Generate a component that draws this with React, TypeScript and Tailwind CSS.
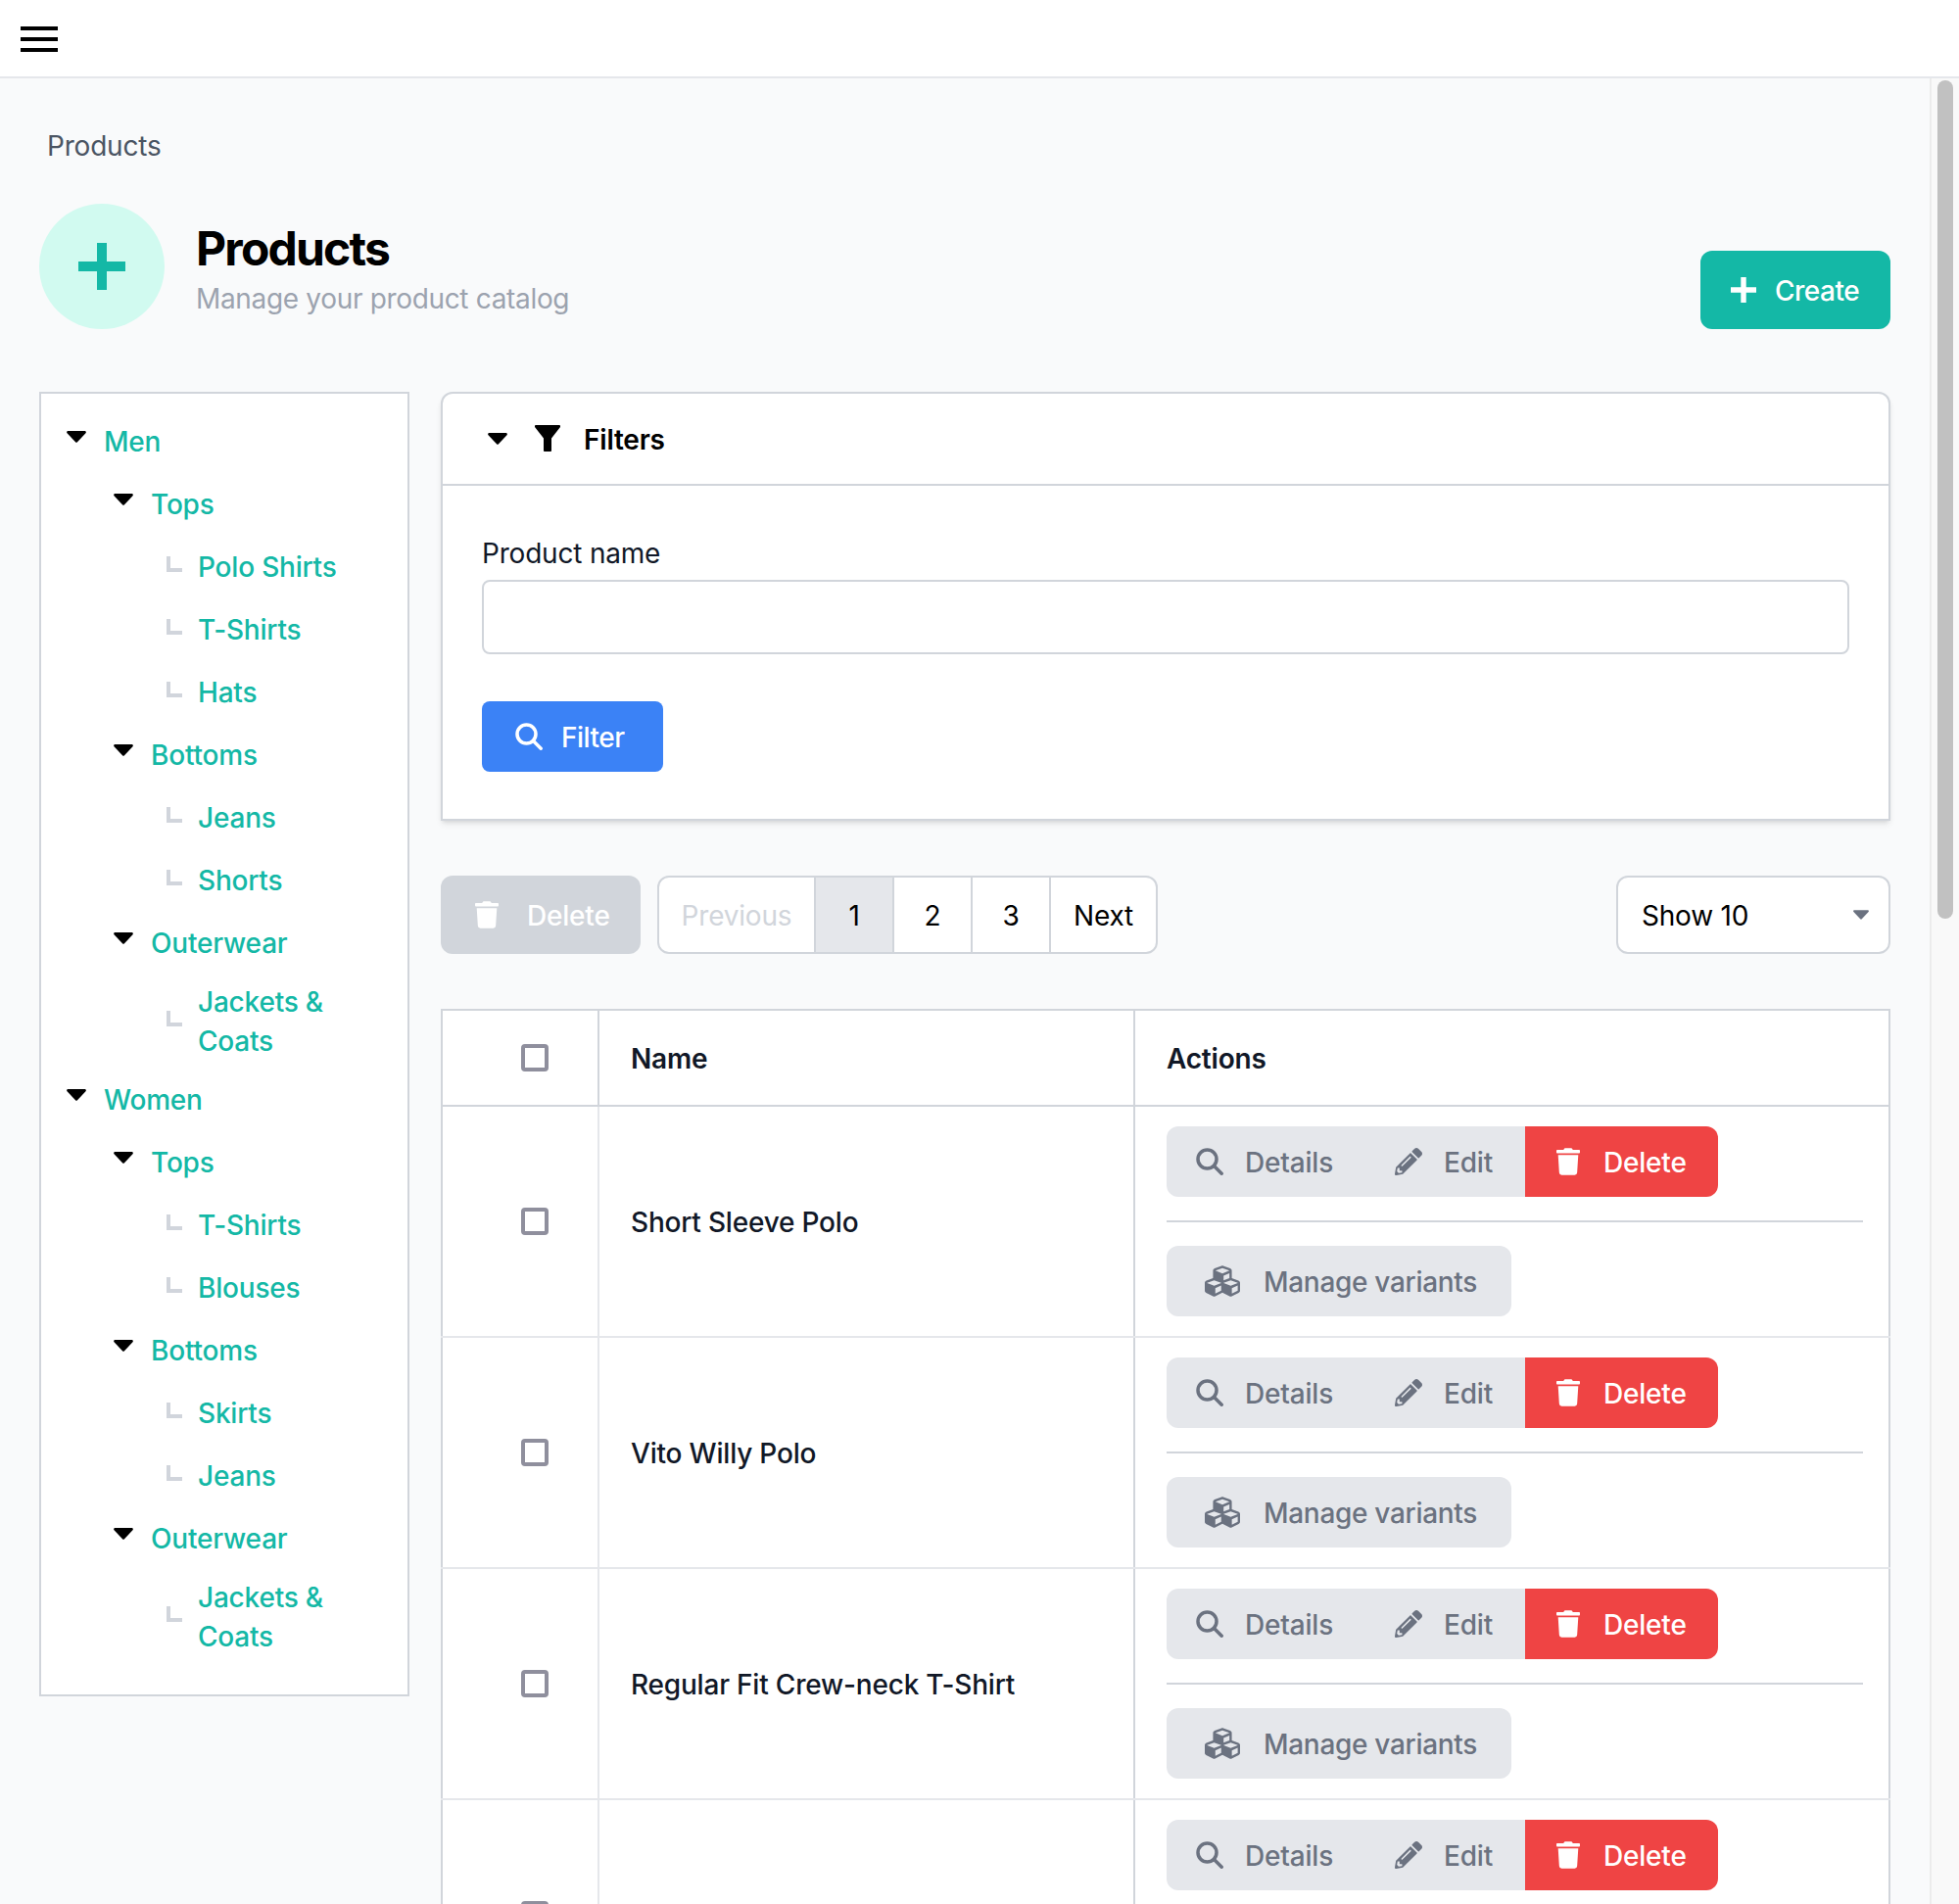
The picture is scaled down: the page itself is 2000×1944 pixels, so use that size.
import React from "react";
import { FaCubes, FaPencilAlt, FaTrash } from "react-icons/fa";

type TreeRow = { label: string; level: 0 | 1 | 2 };

const tree: TreeRow[] = [
  { label: "Men", level: 0 },
  { label: "Tops", level: 1 },
  { label: "Polo Shirts", level: 2 },
  { label: "T-Shirts", level: 2 },
  { label: "Hats", level: 2 },
  { label: "Bottoms", level: 1 },
  { label: "Jeans", level: 2 },
  { label: "Shorts", level: 2 },
  { label: "Outerwear", level: 1 },
  { label: "Jackets & Coats", level: 2 },
  { label: "Women", level: 0 },
  { label: "Tops", level: 1 },
  { label: "T-Shirts", level: 2 },
  { label: "Blouses", level: 2 },
  { label: "Bottoms", level: 1 },
  { label: "Skirts", level: 2 },
  { label: "Jeans", level: 2 },
  { label: "Outerwear", level: 1 },
  { label: "Jackets & Coats", level: 2 },
];

const products = ["Short Sleeve Polo", "Vito Willy Polo", "Regular Fit Crew-neck T-Shirt", ""];

const Caret = ({ className }: { className: string }) => (
  <svg viewBox="0 0 20 12" className={className} fill="currentColor">
    <path d="M1.5 0h17c1.2 0 1.8 1.4 1 2.3l-8.500 9c-.6.7-1.400.7-2 0l-8.500-9C-.3 1.400.3 0 1.500 0z" />
  </svg>
);

const SearchIcon = ({ className }: { className: string }) => (
  <svg viewBox="0 0 28 28" className={className} fill="none" stroke="currentColor" strokeWidth="3.5" strokeLinecap="round">
    <circle cx="11.500" cy="11.500" r="9.500" />
    <path d="M18.500 18.500L26.200 26.200" />
  </svg>
);

const PlusIcon = ({ className }: { className: string }) => (
  <svg viewBox="0 0 24 24" className={className} fill="currentColor">
    <path d="M9.500 0h5v9.500H24v5h-9.500V24h-5v-9.500H0v-5h9.500z" />
  </svg>
);

const FunnelIcon = ({ className }: { className: string }) => (
  <svg viewBox="0 0 26 27" className={className} fill="currentColor">
    <path d="M1 0h24c1 0 1.500 1 1 2l-9 11.500V26c0 .6-.5 1-1 1h-6c-.5 0-1-.4-1-1V13.500L0 2C-.5 1 0 0 1 0z" />
  </svg>
);

const TreeItem = ({ label, level }: TreeRow) => {
  if (level === 2) {
    return (
      <div className="flex items-center min-h-[48px] mb-4 pl-[128px]">
        <svg viewBox="0 0 16 16" className="w-4 h-4 mb-[6px] mr-4 shrink-0 text-gray-300" fill="none" stroke="currentColor" strokeWidth="4">
          <path d="M2 0v14h14" />
        </svg>
        <span className="leading-[40px] font-[550] text-[#14b8a6] pr-10">{label}</span>
      </div>
    );
  }
  return (
    <div className={level === 0 ? "flex items-center h-12 mb-4 pl-[26px]" : "flex items-center h-12 mb-4 pl-[74px]"}>
      <Caret className="w-5 h-3 mb-[10px] mr-[18px] shrink-0 text-black" />
      <span className="font-[550] text-[#14b8a6]">{label}</span>
    </div>
  );
};

const ProductRow = ({ name }: { name: string }) => (
  <tr>
    <td className="border-2 border-[#e5e7eb] border-l-[#d1d5db] pl-[80px]">
      <div className="w-7 h-7 rounded border-4 border-[#8f8f9d] bg-white" />
    </td>
    <td className="border-2 border-[#e5e7eb] border-r-[#d1d5db] pl-8 pt-[2px] font-medium text-[#111827]">{name}</td>
    <td className="border-2 border-[#e5e7eb] border-r-[#d1d5db] pl-8 pr-[26px] py-[20px]">
      <div className="flex">
        <div className="flex items-center h-[72px] w-[366px] bg-[#e5e7eb] rounded-l-xl font-medium text-[#6b7280]">
          <SearchIcon className="w-7 h-7 ml-[30px] mr-[22px]" />
          <span className="pt-[2px]">Details</span>
          <FaPencilAlt className="w-7 h-7 ml-[63px] mr-[22px]" />
          <span className="pt-[2px]">Edit</span>
        </div>
        <div className="flex items-center h-[72px] w-[197px] bg-[#ef4444] rounded-r-xl font-[550] text-white">
          <FaTrash className="w-6 h-7 ml-[32px] mr-[24px]" />
          <span className="pt-[2px]">Delete</span>
        </div>
      </div>
      <div className="h-[2px] bg-[#d1d5db] my-6" />
      <div className="flex items-center h-[72px] w-[352px] bg-[#e5e7eb] rounded-xl font-medium tracking-[-0.3px] text-[#6b7280]">
        <FaCubes className="w-9 h-9 ml-[39px] mr-[24px]" />
        <span className="pt-[2px]">Manage variants</span>
      </div>
    </td>
  </tr>
);

export default function App() {
  return (
    <div className="h-[1944px] flex flex-col overflow-hidden bg-[#f9fafb] text-[28px] tracking-[-0.2px] text-black font-['Inter',sans-serif]">
      <header className="h-[80px] shrink-0 flex items-center bg-white border-b-2 border-[#e5e7eb] pl-[21px]">
        <div className="flex flex-col gap-[7px] w-[38px] mt-[2px]">
          <div className="h-1 bg-black" />
          <div className="h-1 bg-black" />
          <div className="h-1 bg-black" />
        </div>
      </header>

      <div className="flex flex-1 min-h-0">
        <main className="flex-1 min-w-0 overflow-hidden px-10 pt-[48px]">
          <div className="pl-2 leading-[42px] text-[#4b5563]">Products</div>

          <div className="flex items-end justify-between mt-[38px]">
            <div className="flex items-center">
              <div className="w-32 h-32 rounded-full bg-[#d1faf0] flex items-center justify-center text-[#14b8a6]">
                <PlusIcon className="w-12 h-12" />
              </div>
              <div className="ml-8 pt-[5px]">
                <h1 className="text-[48px] leading-[60px] tracking-[-1.8px] font-bold">Products</h1>
                <p className="leading-[42px] tracking-[-0.33px] text-[#9ca3af]">Manage your product catalog</p>
              </div>
            </div>
            <button className="flex items-center h-[80px] w-[194px] rounded-xl bg-[#14b8a6] text-white font-medium tracking-[-0.5px]">
              <PlusIcon className="w-[26px] h-[26px] ml-[31px] mr-[19px]" />
              <span className="pt-[2px]">Create</span>
            </button>
          </div>

          <div className="flex items-start gap-8 mt-[64px]">
            <aside className="w-[378px] shrink-0 border-2 border-[#d1d5db] bg-white pt-[25px] pb-[23px]">
              {tree.map((row, i) => (
                <TreeItem key={i} {...row} />
              ))}
            </aside>

            <div className="flex-1 min-w-0">
              <section className="bg-white border-2 border-[#d1d5db] rounded-t-xl shadow-md">
                <div className="flex items-center h-[94px] border-b-2 border-[#d1d5db] pl-[46px]">
                  <Caret className="w-5 h-3 mr-[28px] text-black" />
                  <FunnelIcon className="w-[26px] h-[27px] mb-[2px] mr-[24px] text-black" />
                  <span className="font-semibold pt-[2px]">Filters</span>
                </div>
                <div className="pt-[51px] px-10 pb-[48px]">
                  <label className="block leading-[36px] font-normal text-[#111827]">Product name</label>
                  <div className="h-[76px] mt-[9px] border-2 border-[#d1d5db] rounded-lg bg-white" />
                  <button className="flex items-center h-[72px] w-[185px] mt-[48px] rounded-lg bg-[#3b82f6] text-white font-medium tracking-[-0.5px]">
                    <SearchIcon className="w-7 h-7 ml-[34px] mr-[19px]" />
                    <span className="pt-[2px]">Filter</span>
                  </button>
                </div>
              </section>

              <div className="flex items-center justify-between mt-[56px]">
                <div className="flex items-center">
                  <button className="flex items-center h-[80px] w-[204px] rounded-xl bg-[#d1d5db] text-white font-medium">
                    <FaTrash className="w-6 h-7 ml-[35px] mr-[29px]" />
                    <span className="pt-[2px]">Delete</span>
                  </button>
                  <div className="flex h-[80px] ml-[17px] border-2 border-[#d1d5db] rounded-xl bg-white overflow-hidden">
                    <div className="flex items-center justify-center w-[158px] pt-[2px] text-[#d1d5db]">Previous</div>
                    <div className="flex items-center justify-center w-[80px] pt-[2px] border-l-2 border-[#d1d5db] bg-[#e5e7eb]">1</div>
                    <div className="flex items-center justify-center w-[80px] pt-[2px] border-l-2 border-[#d1d5db]">2</div>
                    <div className="flex items-center justify-center w-[80px] pt-[2px] border-l-2 border-[#d1d5db]">3</div>
                    <div className="flex items-center justify-center w-[109px] pt-[2px] border-l-2 border-[#d1d5db]">Next</div>
                  </div>
                </div>
                <div className="flex items-center justify-between h-[80px] w-[280px] border-2 border-[#d1d5db] rounded-xl bg-white pl-6 pr-[20px]">
                  <span className="pt-[2px]">Show 10</span>
                  <Caret className="w-4 h-[10px] text-[#6b7280]" />
                </div>
              </div>

              <table className="w-full mt-[56px] bg-white table-fixed border-collapse">
                <colgroup>
                  <col className="w-[160px]" />
                  <col className="w-[547px]" />
                  <col />
                </colgroup>
                <thead>
                  <tr className="h-[98px]">
                    <th className="border-2 border-[#d1d5db] pl-[80px]">
                      <div className="w-7 h-7 rounded border-4 border-[#8f8f9d] bg-white" />
                    </th>
                    <th className="border-2 border-[#d1d5db] pl-8 pt-[2px] text-left font-semibold text-[#111827]">Name</th>
                    <th className="border-2 border-[#d1d5db] pl-8 pt-[2px] text-left font-semibold text-[#111827]">Actions</th>
                  </tr>
                </thead>
                <tbody>
                  {products.map((name, i) => (
                    <ProductRow key={i} name={name} />
                  ))}
                </tbody>
              </table>
            </div>
          </div>
        </main>

        <div className="w-[30px] shrink-0 bg-[#f9f9f9] border-l-2 border-[#ececec] pl-[6px] pt-[2px]">
          <div className="w-4 h-[856px] rounded-full bg-[#c1c1c1]" />
        </div>
      </div>
    </div>
  );
}
